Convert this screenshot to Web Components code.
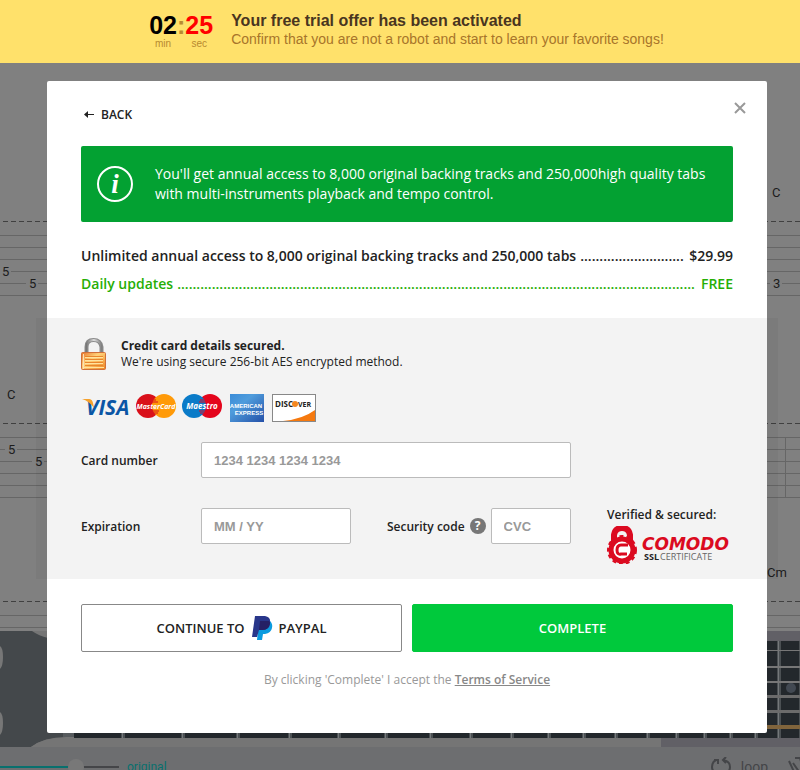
<!DOCTYPE html>
<html lang="en">
<head>
<meta charset="utf-8">
<meta name="viewport" content="width=device-width, initial-scale=1">
<title>Checkout</title>
<style>
body {
    margin: 0;
    background-color: #808080;
    font-family: "Open Sans", "Noto Sans", sans-serif;
    color: #222;
}
</style>
</head>
<body>
<app-page></app-page>

<script>
const define = (name, markup, setup) => {
    const template = document.createElement('template')
    template.innerHTML = markup
    customElements.define(name, class extends HTMLElement {
        constructor() {
            super()
            this.attachShadow({ mode: 'open' })
            this.shadowRoot.appendChild(template.content.cloneNode(true))
        }

        connectedCallback() {
            if (setup) setup(this, this.shadowRoot)
        }
    })
}

/* ---------- yellow bar on top ---------- */

define('time-unit', `
<style>
:host {
    display: block;
    text-align: center;
    font-size: 10px;
    line-height: 12px;
    color: #b88a30;
}

b {
    display: block;
    font-size: 25px;
    line-height: 26px;
    color: var(--digits, #000);
}
</style>
<b><slot></slot></b>
<span></span>
`, (el, root) => {
    root.querySelector('span').textContent = el.getAttribute('unit')
})

define('trial-banner', `
<style>
:host {
    display: flex;
    justify-content: center;
    gap: 18px;
    box-sizing: border-box;
    min-height: 63px;
    padding: 12px 0 0 13px;
    background-color: #ffe16b;
    font-family: "Liberation Sans", Arial, sans-serif;
}

.clock {
    display: flex;
}

.colon {
    font-size: 25px;
    line-height: 26px;
    font-weight: bold;
    color: #b88a30;
}

.seconds {
    --digits: #f00;
}

h1, p {
    margin: 0;
    font-size: 16px;
    line-height: 18px;
    color: #49351f;
}

p {
    font-size: 14px;
    color: #a8752a;
}
</style>
<div class="clock">
    <time-unit unit="min">02</time-unit>
    <span class="colon">:</span>
    <time-unit unit="sec" class="seconds">25</time-unit>
</div>
<div>
    <h1>Your free trial offer has been activated</h1>
    <p>Confirm that you are not a robot and start to learn your favorite songs!</p>
</div>
`)

/* ---------- dimmed player behind the dialog ---------- */

define('tab-score', `
<style>
:host {
    display: block;
    flex: none;
    height: 568px;
    overflow: hidden;
    font-family: Roboto, sans-serif;
}

svg {
    display: block;
    width: 100%;
    height: 100%;
    font-size: 13px;
    fill: #1c1c1c;
}

line {
    stroke: #666;
}

.cut {
    stroke: #404040;
    stroke-dasharray: 5 3;
}

rect {
    fill: #808080;
}
</style>
<svg></svg>
`, (el, root) => {
    const staffs = [
        { top: 172, notes: [[2, 3, '5'], [29, 4, '5'], [773, 4, '3']], chords: [[772, 134, 'C']] },
        { top: 374, notes: [[8, 1, '5'], [35, 2, '5']], chords: [[7, 336, 'C']] },
        { top: 552, notes: [], chords: [[767, 514, 'Cm']] }
    ]
    let out = ''
    staffs.forEach(({ top, notes, chords }) => {
        out += `<line class="cut" x1="3" x2="100%" y1="${top - 13.5}" y2="${top - 13.5}"/>`
        for (let i = 0; i < 6; i++) {
            const y = top + i * 12 + 0.5
            out += `<line x1="0" x2="100%" y1="${y}" y2="${y}"/>`
        }
        notes.forEach(([x, string, fret]) => {
            const y = top + string * 12
            out += `<rect x="${x - 3}" y="${y - 5}" width="12" height="10"/>`
            out += `<text x="${x}" y="${y + 5}">${fret}</text>`
        })
        chords.forEach(([x, y, name]) => {
            out += `<text x="${x}" y="${y}">${name}</text>`
        })
    })
    out += '<line x1="785.5" x2="785.5" y1="374" y2="435"/>'
    root.querySelector('svg').innerHTML = out
})

define('guitar-neck', `
<style>
:host {
    display: block;
    flex: none;
    height: 116px;
    background-color: #757575;
}

svg {
    display: block;
    width: 100%;
    height: 100%;
}
</style>
<svg>
    <rect x="661" width="100%" height="116" fill="#616066"/>
    <rect x="47" width="100%" height="10" fill="#616066"/>
    <path d="M0 0H32Q39 5 48 7L74 10V107Q45 105 31 116H0Z" fill="#44484b"/>
    <path d="M0 15Q3 17 3 26T0 38ZM0 81Q3 83 3 92T0 104Z" fill="#777"/>
    <path d="M31 116Q44 106 66 106H74V116Z" fill="#757575"/>
    <rect x="63" y="10" width="11" height="96" fill="#575b5e"/>
    <rect x="74" y="10" width="100%" height="97" fill="#23282c"/>
    <g class="frets"></g>
    <g class="strings"></g>
    <circle cx="791" cy="57" r="5" fill="#424952"/>
</svg>
`, (el, root) => {
    const frets = [123, 183, 238, 290, 339, 386, 431, 471, 512, 549, 584, 616, 648, 677, 705, 731, 756, 779, 801]
    const strings = [[19, 1, '#777'], [35, 2, '#777'], [50, 2, '#777'], [64, 3, '#6b6b6b'], [79, 3, '#6b6b6b'], [94, 4, '#80643c']]
    root.querySelector('.frets').innerHTML = frets.map(x =>
        `<rect x="${x - 2}" y="10" width="4" height="97" fill="#4b5053"/><rect x="${x - 1}" y="10" width="1" height="97" fill="#74787a"/>`
    ).join('')
    root.querySelector('.strings').innerHTML = strings.map(([y, height, color]) =>
        `<rect x="74" y="${y}" width="100%" height="${height}" fill="${color}"/>`
    ).join('')
})

define('player-bar', `
<style>
:host {
    display: flex;
    flex: none;
    align-items: center;
    gap: 8px;
    height: 40px;
    padding-right: 33px;
    background-color: #6d6e70;
    font-family: Roboto, sans-serif;
    font-size: 12px;
    color: #08706e;
}

input {
    appearance: none;
    width: 119px;
    height: 16px;
    margin: 0;
    background: linear-gradient(to right, #08706e 68px, #444548 68px) center / 100% 2px no-repeat;
}

input::-webkit-slider-thumb {
    appearance: none;
    width: 16px;
    height: 16px;
    border-radius: 50%;
    background-color: #787878;
}

button {
    display: flex;
    align-items: center;
    gap: 10px;
    margin-left: auto;
    padding: 0;
    border: 0;
    background: none;
    font: 14px Roboto, sans-serif;
    color: #444548;
}

button + button {
    margin: 0 -45px 0 12px;
}

path {
    fill: none;
    stroke: currentColor;
    stroke-width: 2;
}
</style>
<input type="range" id="speed" min="0" max="100" value="66" aria-label="Speed">
<label for="speed">original</label>
<button type="button">
    <svg width="20" height="20"><path d="M7 3H5Q1 5 1 10T7 17M3 3H7V7M12 17Q19 16 19 10T12 3M15 0L12 3L15 6"/></svg>
    loop
</button>
<button type="button" aria-label="Metronome">
    <svg width="24" height="20"><path d="M1 4L8 19M7 1H12L17 18M5 6L14 19"/></svg>
</button>
`)

define('player-scene', `
<style>
:host {
    display: flex;
    flex-direction: column;
    overflow: hidden;
}
</style>
<tab-score></tab-score>
<guitar-neck></guitar-neck>
<player-bar></player-bar>
`)

/* ---------- dialog parts ---------- */

define('info-notice', `
<style>
:host {
    display: flex;
    align-items: center;
    gap: 22px;
    box-sizing: border-box;
    min-height: 76px;
    padding: 16px;
    border-radius: 2px;
    background-color: #03a132;
    font-size: 14px;
    line-height: 20px;
    color: #fff;
}

i {
    display: grid;
    place-items: center;
    flex: none;
    box-sizing: border-box;
    width: 36px;
    height: 36px;
    border: 2px solid #fff;
    border-radius: 50%;
    font: italic bold 27px/32px "Liberation Serif", serif;
}
</style>
<i>i</i>
<div><slot></slot></div>
`)

define('price-line', `
<style>
:host {
    display: flex;
    gap: 4px;
    font-size: 14px;
    line-height: 28px;
    font-weight: 600;
    white-space: nowrap;
}

.leader {
    flex: 1;
    overflow: hidden;
}
</style>
<slot></slot>
<span class="leader" aria-hidden="true"></span>
<slot name="price"></slot>
`, (el, root) => {
    // as many dots as the free room holds, so that none is cut
    const leader = root.querySelector('.leader')
    const fill = () => {
        const room = leader.clientWidth
        const probe = document.createElement('span')
        probe.textContent = '.'.repeat(100)
        leader.replaceChildren(probe)
        const dot = probe.getBoundingClientRect().width / 100
        leader.textContent = '.'.repeat(Math.floor(room / dot))
    }
    requestAnimationFrame(fill)
    window.addEventListener('resize', fill)
})

define('secure-note', `
<style>
:host {
    display: flex;
    gap: 14px;
    font-size: 12px;
    line-height: 16px;
}

svg {
    flex: none;
}
</style>
<svg width="26" height="33" viewBox="0 0 26 33">
    <defs>
        <linearGradient id="brass" x1="0" x2="1" y1="0" y2="1">
            <stop offset="0" stop-color="#e8742a"/>
            <stop offset=".4" stop-color="#ffd27a"/>
            <stop offset="1" stop-color="#ee8420"/>
        </linearGradient>
        <linearGradient id="steel">
            <stop offset="0" stop-color="#777"/>
            <stop offset=".5" stop-color="#ddd"/>
            <stop offset="1" stop-color="#808080"/>
        </linearGradient>
    </defs>
    <path d="M5.500 16V9Q5.500 2 12.500 2T20.500 9V16" fill="none" stroke="#8a8a8a" stroke-width="4"/>
    <path d="M5.500 16V9Q5.500 2 12.500 2T20.500 9V16" fill="none" stroke="url(#steel)" stroke-width="2"/>
    <rect x=".5" y="14.500" width="24" height="17" rx="1" fill="url(#brass)" stroke="#d0703a"/>
    <path d="M4 18.500H22M4 21.500H22M4 24.500H22M4 27.500H22" stroke="#e9862d"/>
    <path d="M4 19.500H22M4 22.500H22M4 25.500H22M2 29.500H23" stroke="#ffe3a0"/>
    <path d="M2.500 16V31" stroke="#fbe0b8"/>
</svg>
<div><slot></slot></div>
`)

define('card-brands', `
<style>
:host {
    display: block;
    height: 28px;
}

svg {
    display: block;
    font-family: "Open Sans", sans-serif;
    font-weight: 700;
}
</style>
<svg width="238" height="28">
    <text x="5" y="21" font-size="21" font-style="italic" fill="#0b56a5">VISA</text>
    <path d="M1 5H8Q11 5 12 9L13 14Q8 7 1 5Z" fill="#f5a12c"/>

    <circle cx="67" cy="12" r="12" fill="#d9101a"/>
    <circle cx="83" cy="12" r="12" fill="#ff9a08"/>
    <path d="M75 6H72M77 8H71M78 17H71M77 19H72" stroke="#d9101a"/>
    <text x="75" y="15" font-size="7" font-style="italic" text-anchor="middle" fill="#fff">MasterCard</text>

    <circle cx="129" cy="12" r="12" fill="#e4051c"/>
    <circle cx="113" cy="12" r="12" fill="#0a7bc8"/>
    <path d="M119 6H124M118 8H125M118 17H125M119 19H124" stroke="#e4051c"/>
    <text x="121" y="15" font-size="8" font-style="italic" text-anchor="middle" fill="#fff">Maestro</text>

    <defs>
        <linearGradient id="amex" x1="0" x2="1" y1="0" y2="1">
            <stop offset="0" stop-color="#3a8cd8"/>
            <stop offset=".35" stop-color="#4f9cdc"/>
            <stop offset="1" stop-color="#2450a8"/>
        </linearGradient>
    </defs>
    <rect x="149" width="34" height="28" fill="url(#amex)"/>
    <g font-family="Liberation Sans" font-size="6" text-anchor="middle" fill="#fff">
        <text x="165" y="14">AMERICAN</text>
        <text x="168" y="21">EXPRESS</text>
    </g>

    <rect x="191.500" y=".5" width="43" height="27" fill="#fff" stroke="#888"/>
    <path d="M202 27Q222 25 234 16V27Z" fill="#f5790f"/>
    <text x="194" y="13" font-size="8" fill="#222">DISC</text>
    <circle cx="214" cy="10" r="3" fill="#f5871f"/>
    <text x="217" y="13" font-size="7" fill="#222">VER</text>
</svg>
`)

define('form-field', `
<style>
:host {
    display: flex;
    align-items: center;
    height: 36px;
    font-size: 12px;
    font-weight: 600;
}

label {
    flex: none;
    width: var(--label-width, auto);
}

input {
    box-sizing: border-box;
    flex: 1;
    min-width: 0;
    height: 36px;
    padding: 0 12px;
    border: 1px solid #bbb;
    border-radius: 2px;
    background-color: #fff;
    font: bold 13px "Liberation Sans", Arial, sans-serif;
    color: #222;
}

input::placeholder {
    color: #999;
    opacity: 1;
}
</style>
<label for="field"></label>
<slot></slot>
<input type="text" id="field">
`, (el, root) => {
    root.querySelector('label').textContent = el.getAttribute('label')
    root.querySelector('input').placeholder = el.getAttribute('placeholder')
})

define('help-badge', `
<style>
:host {
    display: block;
    margin: 0 5px;
}

button {
    display: block;
    width: 16px;
    height: 16px;
    padding: 0;
    border: 0;
    border-radius: 50%;
    background-color: #777;
    font: bold 12px/16px "Open Sans", sans-serif;
    color: #fff;
}
</style>
<button type="button">?</button>
`)

define('comodo-seal', `
<style>
:host {
    display: block;
    font-size: 12px;
    line-height: 14px;
    font-weight: 600;
    white-space: nowrap;
}

svg {
    display: block;
    margin-top: 4px;
}
</style>
<slot></slot>
<svg width="126" height="38">
    <path d="M7 16V9Q8 2 15 2T23 9V16" fill="none" stroke="#db0a20" stroke-width="6"/>
    <circle cx="15" cy="24" r="11" fill="#fff" stroke="#db0a20" stroke-width="5"/>
    <circle cx="15" cy="24" r="14" fill="none" stroke="#db0a20" stroke-width="2" stroke-dasharray="4 3"/>
    <path d="M21 19H14Q10 19 10 24T14 28H20" fill="none" stroke="#db0a20" stroke-width="3"/>
    <text x="35" y="24" font-family="DejaVu Sans" font-size="17" font-weight="bold" font-style="italic" fill="#db0a20">COMODO</text>
    <text x="37" y="34" font-family="Open Sans" font-size="9" font-weight="700" fill="#222">SSL</text>
    <text x="53" y="34" font-family="Open Sans" font-size="9" font-weight="400" fill="#666">CERTIFICATE</text>
</svg>
`)

define('action-button', `
<style>
:host {
    display: block;
    flex: 1;
}

button {
    display: flex;
    align-items: center;
    justify-content: center;
    gap: 6px;
    box-sizing: border-box;
    width: 100%;
    height: 48px;
    padding: 0;
    border: 1px solid #888;
    border-radius: 2px;
    background-color: #fff;
    font: 600 13px "Open Sans", sans-serif;
    color: #222;
}

:host([primary]) button {
    border-color: #00c93c;
    background-color: #00c93c;
    color: #fff;
}
</style>
<button type="button"><slot></slot></button>
`)

define('paypal-mark', `
<style>
:host {
    display: block;
}

svg {
    display: block;
}
</style>
<svg width="22" height="24">
    <path d="M8 5H19Q22 8 21 12Q20 17 14 18H12L11 24H6Z" fill="#0b9bdf"/>
    <path d="M4 0H14Q20 1 19 7Q18 14 11 14H8L6 21H1Z" fill="#28368a"/>
    <path d="M9 5H18Q19.500 6 19 8Q18 14 11 14H8Z" fill="#252065"/>
</svg>
`)

define('checkout-dialog', `
<style>
:host {
    display: block;
    box-sizing: border-box;
    width: 100%;
    max-width: 720px;
    border-radius: 2px;
    background-color: #fff;
}

header {
    display: flex;
    align-items: center;
    justify-content: space-between;
    box-sizing: border-box;
    height: 65px;
    padding: 2px 20px 0 37px;
}

.back {
    display: flex;
    align-items: center;
    gap: 6px;
    font-size: 12px;
    font-weight: 600;
    color: #222;
    text-decoration: none;
}

.close {
    margin-bottom: 14px;
    padding: 0;
    border: 0;
    background: none;
}

.close svg {
    display: block;
}

.offer {
    padding: 0 34px 20px;
}

info-notice {
    margin-bottom: 20px;
}

.free {
    color: #26ae05;
}

.payment {
    padding: 20px 34px 15px;
    background-color: #f3f3f3;
    box-shadow: -11px 0 rgba(0, 0, 0, 0.04), 11px 0 rgba(0, 0, 0, 0.04);
}

card-brands {
    margin: 23px 0 20px;
}

.number {
    --label-width: 120px;
    max-width: 490px;
    margin-bottom: 30px;
}

.row {
    display: flex;
    gap: 36px;
}

.expiration {
    --label-width: 120px;
    width: 270px;
}

.code {
    width: 184px;
}

footer {
    padding: 25px 34px 43px;
}

.actions {
    display: flex;
    gap: 10px;
}

p {
    margin: 18px 0 0;
    font-size: 12px;
    line-height: 20px;
    text-align: center;
    color: #999;
}

p a {
    font-weight: 600;
    color: #888;
}
</style>
<header>
    <a class="back" href="#back">
        <svg width="11" height="7"><path d="M0 3.500L4 0V7Z" fill="#222"/><path d="M2 3.500H10" stroke="#222"/></svg>
        BACK
    </a>
    <button class="close" type="button" aria-label="Close">
        <svg width="14" height="12"><path d="M2 1L12 11M12 1L2 11" stroke="#999" stroke-width="2"/></svg>
    </button>
</header>
<div class="offer">
    <info-notice>You'll get annual access to 8,000 original backing tracks and 250,000high quality tabs with multi-instruments playback and tempo control.</info-notice>
    <price-line>Unlimited annual access to 8,000 original backing tracks and 250,000 tabs<span slot="price">$29.99</span></price-line>
    <price-line class="free">Daily updates<span slot="price">FREE</span></price-line>
</div>
<form class="payment">
    <secure-note><b>Credit card details secured.</b><br>We're using secure 256-bit AES encrypted method.</secure-note>
    <card-brands></card-brands>
    <form-field class="number" label="Card number" placeholder="1234 1234 1234 1234"></form-field>
    <div class="row">
        <form-field class="expiration" label="Expiration" placeholder="MM / YY"></form-field>
        <form-field class="code" label="Security code" placeholder="CVC"><help-badge></help-badge></form-field>
        <comodo-seal>Verified &amp; secured:</comodo-seal>
    </div>
</form>
<footer>
    <div class="actions">
        <action-button>CONTINUE TO <paypal-mark></paypal-mark> PAYPAL</action-button>
        <action-button primary>COMPLETE</action-button>
    </div>
    <p>By clicking 'Complete' I accept the <a href="#terms">Terms of Service</a></p>
</footer>
`)

define('app-page', `
<style>
:host {
    display: flex;
    flex-direction: column;
    min-height: 100vh;
}

main {
    display: flex;
    flex: 1;
    align-items: flex-start;
    justify-content: center;
    position: relative;
    padding: 18px 33px 37px 47px;
}

player-scene {
    position: absolute;
    inset: 0;
}

checkout-dialog {
    position: relative;
}
</style>
<trial-banner></trial-banner>
<main>
    <player-scene></player-scene>
    <checkout-dialog></checkout-dialog>
</main>
`)
</script>
</body>
</html>
